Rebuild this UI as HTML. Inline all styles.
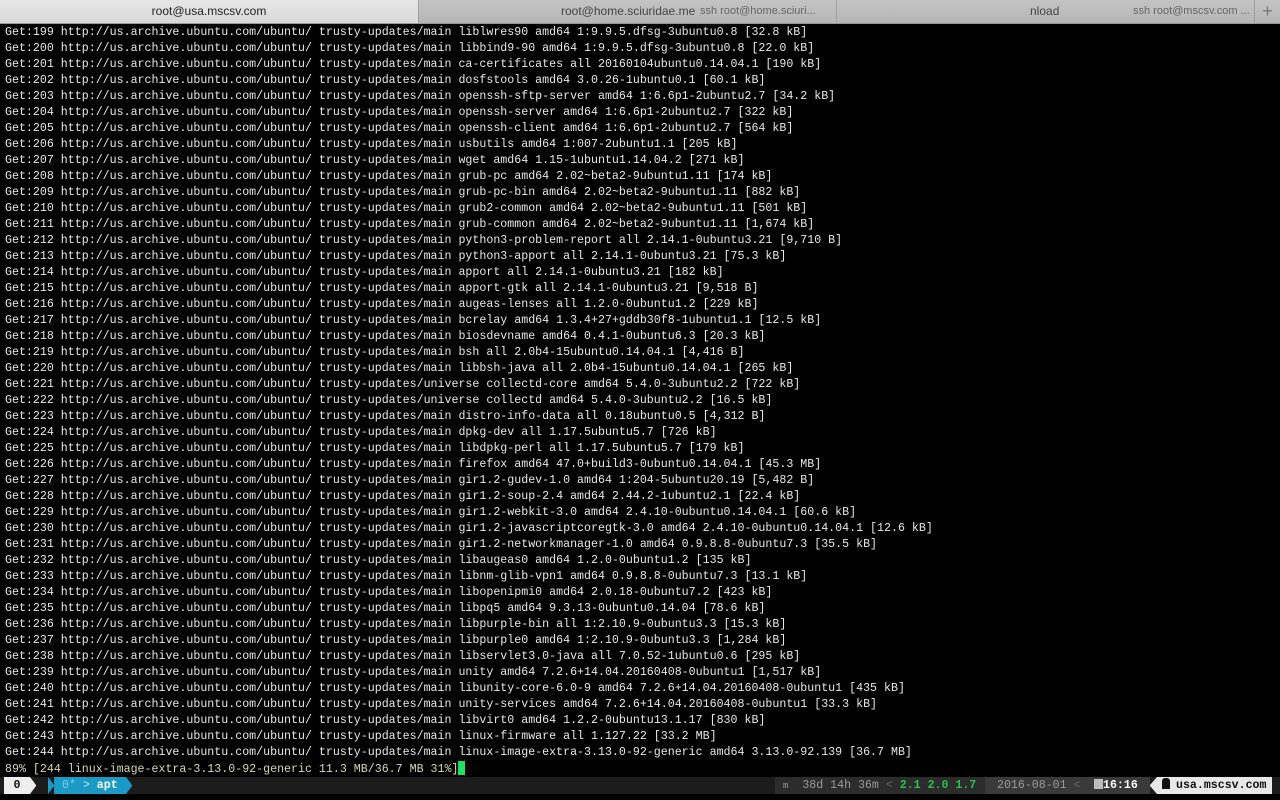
<!DOCTYPE html>
<html><head><meta charset="utf-8"><style>
*{margin:0;padding:0;box-sizing:border-box}
body{width:1280px;height:800px;background:#000;overflow:hidden;font-family:"Liberation Mono",monospace;position:relative}
.tabs{position:absolute;top:0;left:0;width:1280px;height:24px;background:linear-gradient(#c4c4c4,#b6b6b6);border-bottom:1px solid #999;font-family:"Liberation Sans",sans-serif;font-size:12px;color:#444;white-space:nowrap}
.tab{position:absolute;top:0;height:23px;line-height:23px;border-right:1px solid #a0a0a0;white-space:nowrap}
.tab span{white-space:nowrap}
.act{background:linear-gradient(#e6e6e6,#d8d8d8);color:#222}
.term{position:absolute;top:25px;left:5px;font-size:11.63px;line-height:16px;color:#e8e8e8;white-space:pre}
.prog{color:#d8d8b0}
.cur{display:inline-block;width:7px;height:14px;background:#20e060;vertical-align:-3px}
.sb{position:absolute;top:777px;left:0;width:1280px;height:17px;background:#1c1c1c;font-size:11.6px;line-height:17px;white-space:pre;font-weight:bold}
.sb div{position:absolute;top:0;height:17px}
</style></head><body>
<div class="tabs">
<div class="tab act" style="left:0;width:419px;text-align:center">root@usa.mscsv.com</div>
<div class="tab" style="left:419px;width:418px"><span style="position:absolute;left:142px">root@home.sciuridae.me</span><span style="position:absolute;left:281px;color:#666;font-size:11px">ssh root@home.sciuri...</span></div>
<div class="tab" style="left:837px;width:418px"><span style="position:absolute;left:193px">nload</span><span style="position:absolute;left:296px;color:#666;font-size:11px">ssh root@mscsv.com ...</span></div>
<div class="tab" style="left:1255px;width:25px;text-align:center;font-size:18px;color:#777;border:none">+</div>
</div>
<div class="term">Get:199 http://us.archive.ubuntu.com/ubuntu/ trusty-updates/main liblwres90 amd64 1:9.9.5.dfsg-3ubuntu0.8 [32.8 kB]
Get:200 http://us.archive.ubuntu.com/ubuntu/ trusty-updates/main libbind9-90 amd64 1:9.9.5.dfsg-3ubuntu0.8 [22.0 kB]
Get:201 http://us.archive.ubuntu.com/ubuntu/ trusty-updates/main ca-certificates all 20160104ubuntu0.14.04.1 [190 kB]
Get:202 http://us.archive.ubuntu.com/ubuntu/ trusty-updates/main dosfstools amd64 3.0.26-1ubuntu0.1 [60.1 kB]
Get:203 http://us.archive.ubuntu.com/ubuntu/ trusty-updates/main openssh-sftp-server amd64 1:6.6p1-2ubuntu2.7 [34.2 kB]
Get:204 http://us.archive.ubuntu.com/ubuntu/ trusty-updates/main openssh-server amd64 1:6.6p1-2ubuntu2.7 [322 kB]
Get:205 http://us.archive.ubuntu.com/ubuntu/ trusty-updates/main openssh-client amd64 1:6.6p1-2ubuntu2.7 [564 kB]
Get:206 http://us.archive.ubuntu.com/ubuntu/ trusty-updates/main usbutils amd64 1:007-2ubuntu1.1 [205 kB]
Get:207 http://us.archive.ubuntu.com/ubuntu/ trusty-updates/main wget amd64 1.15-1ubuntu1.14.04.2 [271 kB]
Get:208 http://us.archive.ubuntu.com/ubuntu/ trusty-updates/main grub-pc amd64 2.02~beta2-9ubuntu1.11 [174 kB]
Get:209 http://us.archive.ubuntu.com/ubuntu/ trusty-updates/main grub-pc-bin amd64 2.02~beta2-9ubuntu1.11 [882 kB]
Get:210 http://us.archive.ubuntu.com/ubuntu/ trusty-updates/main grub2-common amd64 2.02~beta2-9ubuntu1.11 [501 kB]
Get:211 http://us.archive.ubuntu.com/ubuntu/ trusty-updates/main grub-common amd64 2.02~beta2-9ubuntu1.11 [1,674 kB]
Get:212 http://us.archive.ubuntu.com/ubuntu/ trusty-updates/main python3-problem-report all 2.14.1-0ubuntu3.21 [9,710 B]
Get:213 http://us.archive.ubuntu.com/ubuntu/ trusty-updates/main python3-apport all 2.14.1-0ubuntu3.21 [75.3 kB]
Get:214 http://us.archive.ubuntu.com/ubuntu/ trusty-updates/main apport all 2.14.1-0ubuntu3.21 [182 kB]
Get:215 http://us.archive.ubuntu.com/ubuntu/ trusty-updates/main apport-gtk all 2.14.1-0ubuntu3.21 [9,518 B]
Get:216 http://us.archive.ubuntu.com/ubuntu/ trusty-updates/main augeas-lenses all 1.2.0-0ubuntu1.2 [229 kB]
Get:217 http://us.archive.ubuntu.com/ubuntu/ trusty-updates/main bcrelay amd64 1.3.4+27+gddb30f8-1ubuntu1.1 [12.5 kB]
Get:218 http://us.archive.ubuntu.com/ubuntu/ trusty-updates/main biosdevname amd64 0.4.1-0ubuntu6.3 [20.3 kB]
Get:219 http://us.archive.ubuntu.com/ubuntu/ trusty-updates/main bsh all 2.0b4-15ubuntu0.14.04.1 [4,416 B]
Get:220 http://us.archive.ubuntu.com/ubuntu/ trusty-updates/main libbsh-java all 2.0b4-15ubuntu0.14.04.1 [265 kB]
Get:221 http://us.archive.ubuntu.com/ubuntu/ trusty-updates/universe collectd-core amd64 5.4.0-3ubuntu2.2 [722 kB]
Get:222 http://us.archive.ubuntu.com/ubuntu/ trusty-updates/universe collectd amd64 5.4.0-3ubuntu2.2 [16.5 kB]
Get:223 http://us.archive.ubuntu.com/ubuntu/ trusty-updates/main distro-info-data all 0.18ubuntu0.5 [4,312 B]
Get:224 http://us.archive.ubuntu.com/ubuntu/ trusty-updates/main dpkg-dev all 1.17.5ubuntu5.7 [726 kB]
Get:225 http://us.archive.ubuntu.com/ubuntu/ trusty-updates/main libdpkg-perl all 1.17.5ubuntu5.7 [179 kB]
Get:226 http://us.archive.ubuntu.com/ubuntu/ trusty-updates/main firefox amd64 47.0+build3-0ubuntu0.14.04.1 [45.3 MB]
Get:227 http://us.archive.ubuntu.com/ubuntu/ trusty-updates/main gir1.2-gudev-1.0 amd64 1:204-5ubuntu20.19 [5,482 B]
Get:228 http://us.archive.ubuntu.com/ubuntu/ trusty-updates/main gir1.2-soup-2.4 amd64 2.44.2-1ubuntu2.1 [22.4 kB]
Get:229 http://us.archive.ubuntu.com/ubuntu/ trusty-updates/main gir1.2-webkit-3.0 amd64 2.4.10-0ubuntu0.14.04.1 [60.6 kB]
Get:230 http://us.archive.ubuntu.com/ubuntu/ trusty-updates/main gir1.2-javascriptcoregtk-3.0 amd64 2.4.10-0ubuntu0.14.04.1 [12.6 kB]
Get:231 http://us.archive.ubuntu.com/ubuntu/ trusty-updates/main gir1.2-networkmanager-1.0 amd64 0.9.8.8-0ubuntu7.3 [35.5 kB]
Get:232 http://us.archive.ubuntu.com/ubuntu/ trusty-updates/main libaugeas0 amd64 1.2.0-0ubuntu1.2 [135 kB]
Get:233 http://us.archive.ubuntu.com/ubuntu/ trusty-updates/main libnm-glib-vpn1 amd64 0.9.8.8-0ubuntu7.3 [13.1 kB]
Get:234 http://us.archive.ubuntu.com/ubuntu/ trusty-updates/main libopenipmi0 amd64 2.0.18-0ubuntu7.2 [423 kB]
Get:235 http://us.archive.ubuntu.com/ubuntu/ trusty-updates/main libpq5 amd64 9.3.13-0ubuntu0.14.04 [78.6 kB]
Get:236 http://us.archive.ubuntu.com/ubuntu/ trusty-updates/main libpurple-bin all 1:2.10.9-0ubuntu3.3 [15.3 kB]
Get:237 http://us.archive.ubuntu.com/ubuntu/ trusty-updates/main libpurple0 amd64 1:2.10.9-0ubuntu3.3 [1,284 kB]
Get:238 http://us.archive.ubuntu.com/ubuntu/ trusty-updates/main libservlet3.0-java all 7.0.52-1ubuntu0.6 [295 kB]
Get:239 http://us.archive.ubuntu.com/ubuntu/ trusty-updates/main unity amd64 7.2.6+14.04.20160408-0ubuntu1 [1,517 kB]
Get:240 http://us.archive.ubuntu.com/ubuntu/ trusty-updates/main libunity-core-6.0-9 amd64 7.2.6+14.04.20160408-0ubuntu1 [435 kB]
Get:241 http://us.archive.ubuntu.com/ubuntu/ trusty-updates/main unity-services amd64 7.2.6+14.04.20160408-0ubuntu1 [33.3 kB]
Get:242 http://us.archive.ubuntu.com/ubuntu/ trusty-updates/main libvirt0 amd64 1.2.2-0ubuntu13.1.17 [830 kB]
Get:243 http://us.archive.ubuntu.com/ubuntu/ trusty-updates/main linux-firmware all 1.127.22 [33.2 MB]
Get:244 http://us.archive.ubuntu.com/ubuntu/ trusty-updates/main linux-image-extra-3.13.0-92-generic amd64 3.13.0-92.139 [36.7 MB]
<span class="prog">89% [244 linux-image-extra-3.13.0-92-generic 11.3 MB/36.7 MB 31%]</span><span class="cur"></span></div>
<div class="sb">
<div style="left:4px;width:26px;background:#eee;color:#111;text-align:center">0</div>
<div style="left:30px;width:0;border-top:8.5px solid transparent;border-bottom:8.5px solid transparent;border-left:6px solid #eee"></div>
<div style="left:48px;width:78px;background:#1a9ac4;color:#fff"><span style="color:#7fd0ee;font-weight:normal;padding-left:14px">0*</span><span style="color:#bfe6f5;font-weight:normal"> &gt; </span>apt</div>
<div style="left:48px;width:0;border-top:8.5px solid #1c1c1c;border-bottom:8.5px solid #1c1c1c;border-left:6px solid transparent"></div>
<div style="left:126px;width:0;border-top:8.5px solid transparent;border-bottom:8.5px solid transparent;border-left:6px solid #1a9ac4"></div>
<div style="left:775px;width:210px;background:#2c2c2c;color:#999;font-weight:normal"><span style="font-size:9px;padding-left:8px">m</span>  38d 14h 36m <span style="color:#666">&lt;</span><span style="color:#2bbf4c;font-weight:bold"> 2.1 2.0 1.7</span></div>
<div style="left:985px;width:105px;background:#3a3a3a;color:#999;font-weight:normal"><span style="padding-left:12px">2016-08-01</span> <span style="color:#666">&lt;</span></div>
<div style="left:1090px;width:60px;background:#3a3a3a;color:#fff"><span style="display:inline-block;width:9px;height:10px;background:#bbb;vertical-align:-1px;margin-left:4px"></span>16:16</div>
<div style="left:1150px;width:0;border-top:8.5px solid transparent;border-bottom:8.5px solid transparent;border-right:7px solid #e8e8e8"></div>
<div style="left:1157px;width:115px;background:#e8e8e8;color:#111"><span style="display:inline-block;width:8px;height:11px;background:#111;border-radius:3px 3px 0 0;vertical-align:-1px;margin:0 6px 0 5px"></span>usa.mscsv.com</div>
</div>
</body></html>
